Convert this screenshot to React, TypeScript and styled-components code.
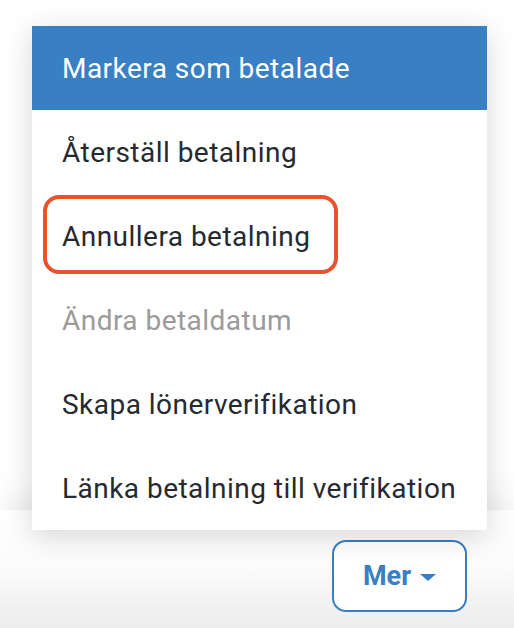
import React from "react";
import styled, { createGlobalStyle } from "styled-components";

const Global = createGlobalStyle`
  html, body { margin: 0; padding: 0; background: #ffffff; }
  body { font-family: Roboto, "Noto Sans", "Liberation Sans", sans-serif; }
`;

const Page = styled.div`
  width: 514px;
  height: 628px;
  display: flex;
  flex-direction: column;
  overflow: hidden;
  background: #ffffff;
`;

const Content = styled.div`
  flex: 1;
  background: #ffffff;
`;

const Footer = styled.div`
  height: 118px;
  display: flex;
  justify-content: flex-end;
  align-items: flex-start;
  padding: 30px 47px 0 0;
  box-sizing: border-box;
  background: linear-gradient(to bottom, #ffffff 0%, #fbfbfb 50%, #ececec 100%);
  box-shadow: 0 -6px 40px rgba(0, 0, 0, 0.09);
  position: relative;
`;

const Anchor = styled.div`
  position: relative;
`;

const Menu = styled.ul`
  position: absolute;
  right: -20px;
  bottom: calc(100% + 10px);
  width: 455px;
  margin: 0;
  padding: 0;
  list-style: none;
  background: #ffffff;
  box-shadow: 0 6px 28px rgba(0, 0, 0, 0.16);
  z-index: 10;
`;

const Item = styled.li<{ $active?: boolean; $disabled?: boolean }>`
  position: relative;
  height: 84px;
  display: flex;
  align-items: center;
  padding-left: 30px;
  font-size: 28px;
  letter-spacing: 0.47px;
  white-space: nowrap;
  background: ${(p) => (p.$active ? "#387fc3" : "#ffffff")};
  color: ${(p) => (p.$active ? "#ffffff" : p.$disabled ? "#9b9b9b" : "#252a30")};
`;

const Highlight = styled.span`
  position: absolute;
  left: 11px;
  top: 1px;
  width: 295px;
  height: 79px;
  box-sizing: border-box;
  border: 4px solid #e8532f;
  border-radius: 16px;
  pointer-events: none;
`;

const MoreButton = styled.button`
  width: 135px;
  height: 72px;
  box-sizing: border-box;
  border: 2px solid #3a7ec3;
  border-radius: 14px;
  background: #ffffff;
  color: #3a7ec3;
  font-family: Roboto, "Noto Sans", "Liberation Sans", sans-serif;
  font-weight: 700;
  font-size: 27px;
  display: flex;
  align-items: center;
  justify-content: center;
  gap: 9px;
  padding: 0;
  cursor: pointer;
`;

const Caret = styled.span`
  width: 0;
  height: 0;
  border-left: 8px solid transparent;
  border-right: 8px solid transparent;
  border-top: 7px solid #3a7ec3;
  margin-top: 3px;
`;

const items: { label: string; active?: boolean; disabled?: boolean; marked?: boolean }[] = [
  { label: "Markera som betalade", active: true },
  { label: "Återställ betalning" },
  { label: "Annullera betalning", marked: true },
  { label: "Ändra betaldatum", disabled: true },
  { label: "Skapa lönerverifikation" },
  { label: "Länka betalning till verifikation" },
];

export default function App() {
  return (
    <>
      <Global />
      <Page>
        <Content />
        <Footer>
          <Anchor>
            <Menu>
              {items.map((it) => (
                <Item key={it.label} $active={it.active} $disabled={it.disabled}>
                  {it.marked && <Highlight />}
                  {it.label}
                </Item>
              ))}
            </Menu>
            <MoreButton>
              Mer
              <Caret />
            </MoreButton>
          </Anchor>
        </Footer>
      </Page>
    </>
  );
}
